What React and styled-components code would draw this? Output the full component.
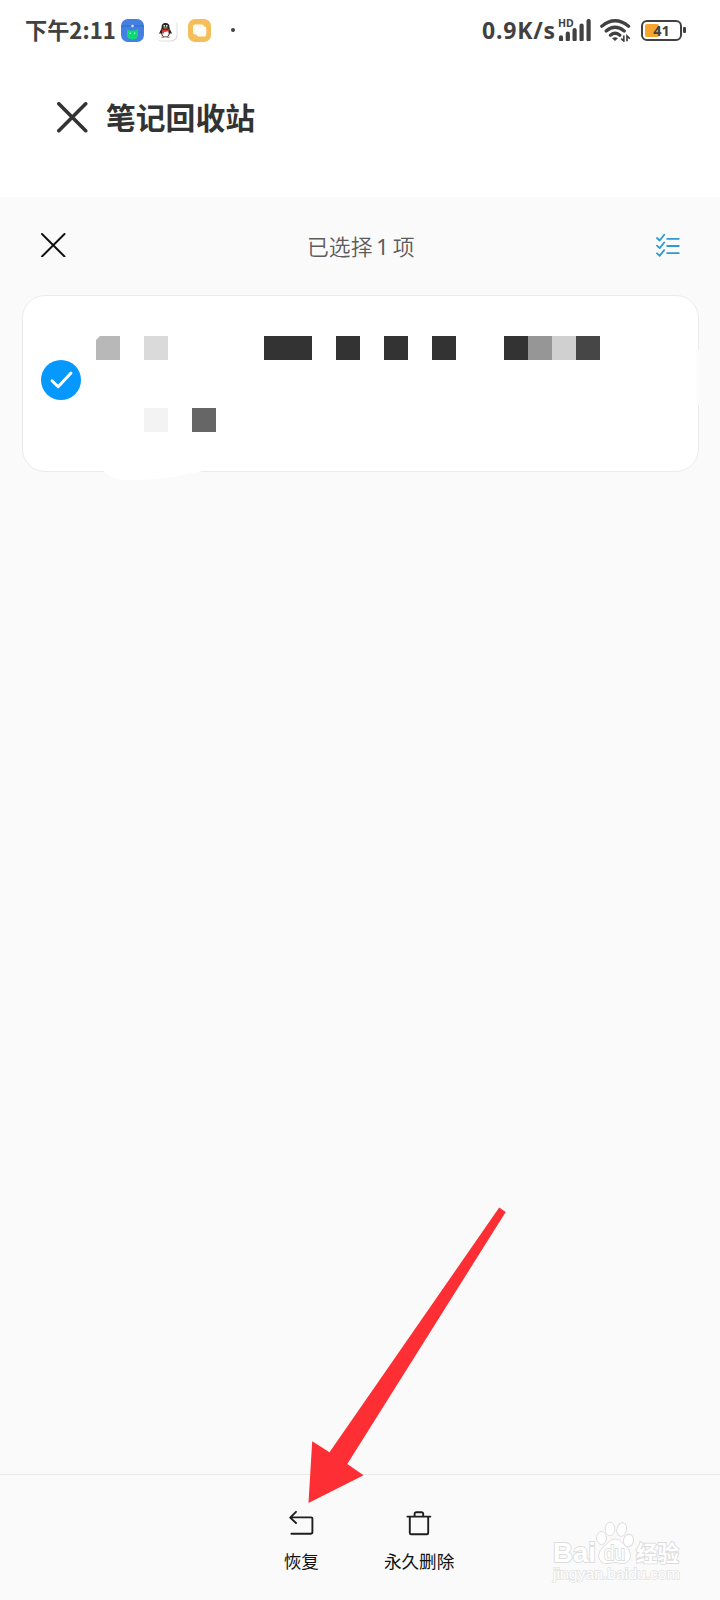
import React from 'react';
import styled, {createGlobalStyle} from 'styled-components';

const dark = '#333';

// one entry per 24px column, null leaves the cell empty
const noteRows = [
    ['#b8b8b8',null,'#dadada',null,null,null,null,dark,dark,null,dark,null,dark,null,dark,null,null,dark,'#969696','#d0d0d0','#464646'],
    [],
    [],
    [null,null,'#f3f3f3',null,'#666'],
];

const CloseIcon = ({size,color,stroke}) => (
    <svg width={size} height={size} viewBox={`0 0 ${size} ${size}`}>
        <path
            d={`M${stroke/2} ${stroke/2}L${size-stroke/2} ${size-stroke/2}M${size-stroke/2} ${stroke/2}L${stroke/2} ${size-stroke/2}`}
            stroke={color}
            strokeWidth={stroke}
            strokeLinecap="round"
        />
    </svg>
);

const RobotIcon = () => (
    <svg width="23" height="23" viewBox="0 0 23 23">
        <rect width="23" height="23" rx="7" fill="#447fe2"/>
        <path d="M0 7H23" stroke="#3269c4" strokeWidth="1"/>
        <circle cx="11.5" cy="7" r="1.3" fill="#d5e4fb"/>
        <path d="M6 10L8.5 11.5H14.5L17 10V16.5Q16.5 20.5 11.5 20.5T6 16.5Z" fill="#0fd877"/>
        <circle cx="9.2" cy="14.2" r=".8" fill="#c8ffe4"/>
        <circle cx="13.6" cy="14.2" r=".8" fill="#c8ffe4"/>
    </svg>
);

const PenguinIcon = () => (
    <svg width="23" height="23" viewBox="0 0 23 23">
        <rect x="1" y="1" width="21.5" height="21.5" rx="6" fill="#dedede"/>
        <rect x="0" y="0" width="21.5" height="21.5" rx="6" fill="#fff"/>
        <path d="M6.6 9Q6.2 4 10.5 4T14.5 9L17 14.8L14.9 14.2Q14.2 18.2 10.5 18.2T6.1 14.2L4 14.8Z" fill="#222"/>
        <ellipse cx="10.5" cy="14.2" rx="3.2" ry="3.4" fill="#fff"/>
        <circle cx="9.2" cy="6.8" r=".9" fill="#fff"/>
        <circle cx="11.7" cy="6.8" r=".9" fill="#fff"/>
        <path d="M6.3 9.4Q10.5 12.5 14.7 9.4L15 11Q11 13.5 9.1 12.8V14.6H7.2V12.2Z" fill="#e13434"/>
        <path d="M8.5 8.9H12.5" stroke="#efa23c" strokeWidth="1.1"/>
        <path d="M6.4 18.2H9.6M11.4 18.2H14.6" stroke="#a8702e" strokeWidth="1"/>
    </svg>
);

const NotesIcon = () => (
    <svg width="23" height="23" viewBox="0 0 23 23">
        <rect width="23" height="23" rx="7" fill="#f6be59"/>
        <path d="M7 5.5H14Q16 5.5 16 7.5H16.5Q18.3 7.5 18.3 9.5V15.5Q18.3 17.5 16.3 17.5H10.5Q8.5 17.5 8.5 15.5H7Q5 15.5 5 13.5V7.5Q5 5.5 7 5.5Z" fill="#fffdf8"/>
    </svg>
);

const SignalIcon = () => (
    <svg width="34" height="22" viewBox="0 0 34 22">
        <path d="M3 20.4V18.4M9.8 20.4V14.5M16.6 20.4V11M23.6 20.4V6.6M30.6 20.4V2" stroke="#414141" strokeWidth="4.2" strokeLinecap="round"/>
    </svg>
);

const WifiIcon = () => (
    <svg width="31" height="23" viewBox="0 0 31 23" fill="none">
        <path d="M1.8 7.2Q15 -3.6 28.6 7.2M6.2 12Q15 4.6 24.2 12M10.5 16.2Q15 12.4 19.8 16.2" stroke="#414141" strokeWidth="3.3" strokeLinecap="round"/>
        <path d="M12 19.3Q15 17.2 18 19.3L15 22Z" fill="#414141"/>
        <path d="M23.8 16.6V22L21.2 19.6M27 22.2V17L29.8 19.6" stroke="#414141" strokeWidth="1.7"/>
    </svg>
);

const CheckListIcon = () => (
    <svg width="24" height="24" viewBox="0 0 24 24" fill="none" stroke="#2f9acf" strokeWidth="1.8" strokeLinecap="round" strokeLinejoin="round">
        <path d="M1 5L3.7 7.5L8.2 1.8M1 12.7L3.7 15.1L8.2 9.5M1 20.3L3.7 22.8L8.2 17.1M11.2 5.8H22.8M11.2 13H22.8M11.2 20.2H22.8"/>
    </svg>
);

const RestoreIcon = () => (
    <svg width="26" height="26" viewBox="0 0 26 26" fill="none" stroke="#1e1e1e" strokeWidth="1.9" strokeLinecap="round" strokeLinejoin="round">
        <path d="M8 1.8L2.2 7.6L8 13M2.6 7.4H23.2Q24.4 7.4 24.4 8.6V22Q24.4 23.7 22.7 23.7H3.4"/>
    </svg>
);

const TrashIcon = () => (
    <svg width="26" height="26" viewBox="0 0 26 26" fill="none" stroke="#1e1e1e" strokeWidth="1.9" strokeLinecap="round" strokeLinejoin="round">
        <path d="M1.4 6.6H24.4M3.8 6.6V23Q3.8 24.3 5.2 24.3H20.8Q22.2 24.3 22.2 23V6.6M8.6 6.6V3.8Q8.6 2.2 10 2.2H15.8Q17.2 2.2 17.2 3.8V6.6"/>
    </svg>
);

const App = () => {
    return(
        <>
            <GlobalStyle/>
            <Screen>
                <StatusBar>
                    <Clock>下午2:11</Clock>
                    <AppIcons>
                        <RobotIcon/>
                        <PenguinIcon/>
                        <NotesIcon/>
                        <Dot/>
                    </AppIcons>
                    <Speed>0.9K/s</Speed>
                    <Signal>
                        <SignalIcon/>
                        <HdLabel>HD</HdLabel>
                    </Signal>
                    <Wifi><WifiIcon/></Wifi>
                    <Battery>
                        <BatteryLevel/>
                        <BatteryText>41</BatteryText>
                    </Battery>
                    <BatteryTip/>
                </StatusBar>
                <Header>
                    <CloseIcon size={30.5} color="#333" stroke={3.6}/>
                    <h1>笔记回收站</h1>
                </Header>
                <Content>
                    <SelectBar>
                        <CloseIcon size={24.5} color="#111" stroke={2}/>
                        <SelectTitle>已选择 <span>1</span> 项</SelectTitle>
                        <CheckListIcon/>
                    </SelectBar>
                    <NoteCard>
                        <Check>
                            <svg width="40" height="40" viewBox="0 0 40 40" fill="none">
                                <path d="M11 20.7L17.2 26.8L30 13" stroke="#fff" strokeWidth="2.9" strokeLinecap="round" strokeLinejoin="round"/>
                            </svg>
                        </Check>
                        <Mosaic>
                            {noteRows.map((row,i)=>(
                                <MosaicRow key={i}>
                                    {row.map((color,j)=>(
                                        <Cell key={j} $color={color} $cut={i === 0 && j === 0}/>
                                    ))}
                                </MosaicRow>
                            ))}
                        </Mosaic>
                        <BottomSmudge viewBox="0 0 100 11">
                            <path d="M0 0H100V2Q78 7 56 10Q40 11 20 11Q8 10 0 2Z" fill="#fff"/>
                        </BottomSmudge>
                        <SideSmudge/>
                    </NoteCard>
                </Content>
                <ActionBar>
                    <Action>
                        <RestoreIcon/>
                        <span>恢复</span>
                    </Action>
                    <Action>
                        <TrashIcon/>
                        <span>永久删除</span>
                    </Action>
                </ActionBar>
                <Arrow viewBox="0 0 200 300">
                    <path d="M199.2 7.5L205.7 12L47.3 264L63.6 275.3L8.5 303L12.2 241.3L29.5 252.2Z" fill="#fe2f34"/>
                </Arrow>
                <Watermark viewBox="0 0 140 66">
                    <g fill="#fff" stroke="#dedede" strokeWidth="1">
                        <ellipse cx="51.5" cy="21" rx="5" ry="6.5"/>
                        <ellipse cx="60" cy="12" rx="4.8" ry="6.8"/>
                        <ellipse cx="71.7" cy="12.5" rx="4.8" ry="6.8" transform="rotate(12 71.7 12.5)"/>
                        <ellipse cx="78.5" cy="23.5" rx="5" ry="6.3" transform="rotate(10 78.5 23.5)"/>
                        <path d="M65 22Q70 22 73.5 27Q81 33 80.5 39.5Q79 47 72 46.5Q65 44.5 58 46.5Q50 47.5 48.5 39Q49 33 56 27.5Q60 22 65 22Z"/>
                    </g>
                    <g fill="#fff" stroke="#dcdcdc" strokeWidth="1.8" paintOrder="stroke">
                        <text x="3" y="45" fontSize="28" fontWeight="700" textLength="43" lengthAdjust="spacingAndGlyphs">Bai</text>
                        <text x="54" y="43" fontSize="20" fontWeight="400" textLength="21" lengthAdjust="spacingAndGlyphs">du</text>
                        <text x="86" y="43.5" fontSize="21.5" fontWeight="700" textLength="43">经验</text>
                    </g>
                    <text x="3" y="62" fontSize="14" fill="#fff" stroke="#e2e2e2" strokeWidth="1.4" paintOrder="stroke" textLength="127" lengthAdjust="spacingAndGlyphs">jingyan.baidu.com</text>
                </Watermark>
            </Screen>
        </>
    )
}

const GlobalStyle = createGlobalStyle`
    *{
        box-sizing:border-box;
        margin:0;
        padding:0;
    }
    body{
        font-family:"Noto Sans CJK SC", sans-serif;
        background:#fff;
    }
    svg{
        display:block;
        flex-shrink:0;
    }
`

const Screen = styled.div`
    position:relative;
    display:flex;
    flex-direction:column;
    width:720px;
    height:1600px;
    overflow:hidden;
`

const StatusBar = styled.div`
    display:flex;
    align-items:center;
    height:60px;
    padding-left:25px;
    color:#414141;
    font-weight:700;
    white-space:nowrap;
`
const Clock = styled.div`
    width:96px;
    padding-bottom:2px;
    font-size:22.2px;
    line-height:32px;
`
const AppIcons = styled.div`
    display:flex;
    align-items:center;
    gap:10.5px;
    width:361px;
`
const Dot = styled.i`
    width:4px;
    height:4px;
    margin-left:9px;
    border-radius:50%;
    background:#414141;
`
const Speed = styled.div`
    width:76px;
    font-family:"Noto Sans", sans-serif;
    font-size:23px;
    line-height:32px;
    letter-spacing:.8px;
`
const Signal = styled.div`
    position:relative;
    width:42px;
`
const HdLabel = styled.span`
    position:absolute;
    top:-2px;
    left:0;
    font-family:"Noto Sans", sans-serif;
    font-size:10.5px;
    line-height:12px;
`
const Wifi = styled.div`
    width:41px;
`
const Battery = styled.div`
    position:relative;
    width:41px;
    height:21px;
    padding:2px;
    border:2.5px solid #414141;
    border-radius:6px;
`
const BatteryLevel = styled.div`
    width:14px;
    height:100%;
    border-radius:2px;
    background:#f6a52d;
`
const BatteryText = styled.span`
    position:absolute;
    inset:0;
    text-align:center;
    font-family:"Noto Sans", sans-serif;
    font-size:14.5px;
    line-height:16px;
`
const BatteryTip = styled.i`
    width:3px;
    height:6px;
    margin-left:1px;
    border-radius:1px;
    background:#414141;
`

const Header = styled.header`
    display:flex;
    align-items:center;
    gap:18.5px;
    height:137px;
    padding:0 0 22px 57px;
    h1{
        padding-bottom:4px;
        color:#333;
        font-size:29.8px;
        font-weight:700;
        line-height:40px;
    }
`

const Content = styled.main`
    flex:1;
    background:#fafafa;
`
const SelectBar = styled.div`
    display:flex;
    align-items:center;
    justify-content:space-between;
    height:98px;
    padding:0 40px 2px 41px;
`
const SelectTitle = styled.p`
    padding-top:2px;
    color:#5c5c5c;
    font-size:21.8px;
    font-weight:350;
    line-height:32px;
    word-spacing:-1px;
    span{
        font-family:"Noto Sans", sans-serif;
        font-weight:400;
    }
`
const NoteCard = styled.div`
    position:relative;
    display:flex;
    align-items:flex-start;
    width:677px;
    height:177px;
    margin-left:22px;
    padding:40px 0 0 17px;
    background:#fff;
    border:1.5px solid #ebebeb;
    border-radius:23px;
`
const Check = styled.div`
    width:40px;
    height:40px;
    margin:24px 15px 0 1px;
    border-radius:50%;
    background:#0599ff;
`
const Mosaic = styled.div`
    display:grid;
    grid-template-rows:repeat(4, 24px);
`
const MosaicRow = styled.div`
    display:flex;
`
const Cell = styled.i`
    width:24px;
    height:24px;
    background:${({$color}) => $color || 'transparent'};
    clip-path:${({$cut}) => $cut ? 'polygon(4px 0, 100% 0, 100% 100%, 0 100%, 0 4px)' : 'none'};
`
const BottomSmudge = styled.svg`
    position:absolute;
    left:80px;
    bottom:-9px;
    width:100px;
    height:11px;
`
const SideSmudge = styled.i`
    position:absolute;
    top:54px;
    right:-1px;
    width:3px;
    height:55px;
    background:#fcfcfc;
`

const ActionBar = styled.footer`
    display:flex;
    justify-content:center;
    gap:65px;
    height:126px;
    padding:35px 0 0 18px;
    background:#fafafa;
    border-top:1.5px solid #e9e9e9;
`
const Action = styled.div`
    display:flex;
    flex-direction:column;
    align-items:center;
    gap:11px;
    color:#111;
    span{
        font-size:17.6px;
        line-height:28px;
    }
`

const Arrow = styled.svg`
    position:absolute;
    left:300px;
    top:1200px;
    width:200px;
    height:300px;
    overflow:visible;
`
const Watermark = styled.svg`
    position:absolute;
    left:550px;
    top:1517px;
    width:140px;
    height:66px;
    font-family:"Liberation Sans", "Noto Sans CJK SC", sans-serif;
`

export default App;
